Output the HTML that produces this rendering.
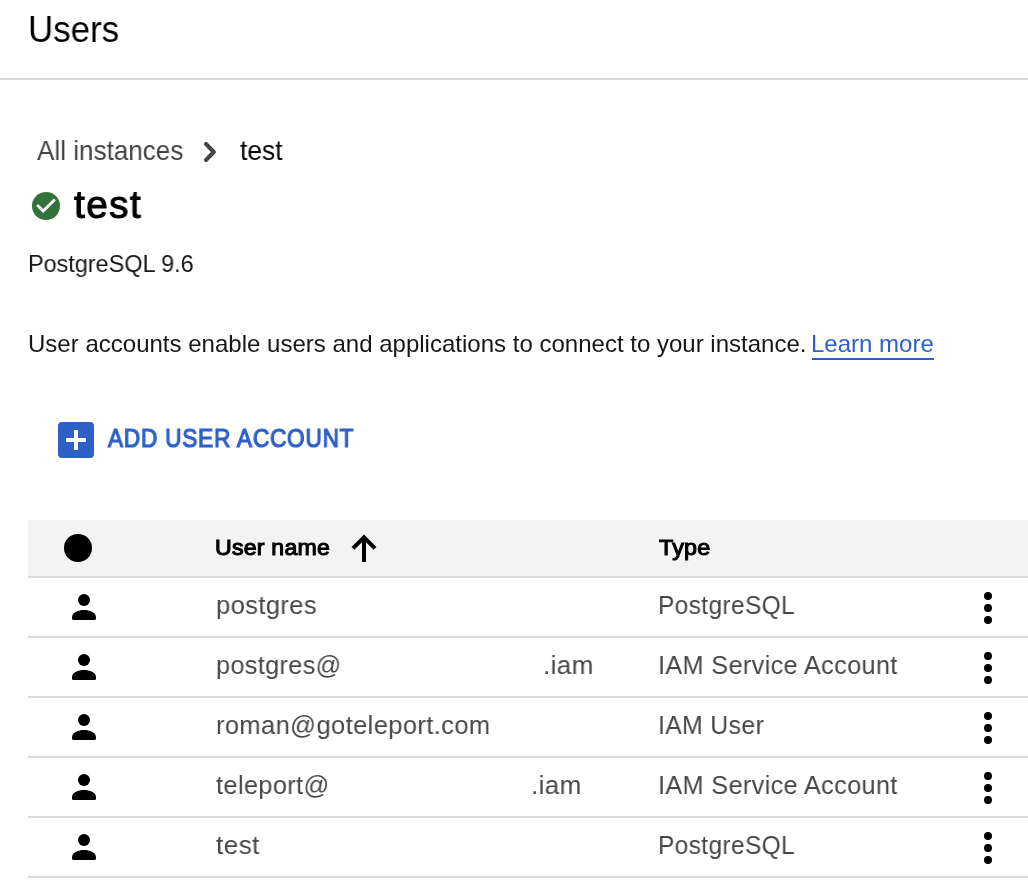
<!DOCTYPE html>
<html><head><meta charset="utf-8"><style>
html,body{margin:0;padding:0;background:#fff;width:1028px;height:894px;overflow:hidden;position:relative}
.t{position:absolute;white-space:pre;will-change:transform;font-family:"Liberation Sans",sans-serif;transform-origin:0 0}
.line{position:absolute;left:28px;width:1000px;height:2px;background:#dadada}
.ic{position:absolute;fill:#000}
</style></head><body>
<div style="position:absolute;left:0;top:78px;width:1028px;height:2px;background:#d9d9d9"></div>
<svg class="ic" style="left:204px;top:142px" width="13" height="20" viewBox="0 0 13 20"><path d="M2 2L9.8 10L2 18" fill="none" stroke="#444" stroke-width="4" stroke-linecap="round" stroke-linejoin="round"/></svg>
<svg class="ic" style="left:32px;top:192px" width="28" height="28" viewBox="2 2 20 20"><circle cx="12" cy="12" r="10" fill="#33733b"/><path d="M10 17l-5-5 1.41-1.41L10 14.17l7.59-7.59L19 8z" fill="#fff"/></svg>
<div style="position:absolute;left:812px;top:358px;width:122px;height:2px;background:#2e60c8"></div>
<div style="position:absolute;left:58px;top:422px;width:36px;height:36px;border-radius:4px;background:#2e60c8"></div>
<div style="position:absolute;left:66px;top:438px;width:20px;height:4px;background:#fff"></div>
<div style="position:absolute;left:74px;top:430px;width:4px;height:20px;background:#fff"></div>
<div style="position:absolute;left:28px;top:520px;width:1000px;height:56px;background:#f3f3f3"></div>
<div class="line" style="top:576px"></div>
<svg class="ic" style="left:64px;top:534px" width="28" height="28" viewBox="0 0 28 28"><circle cx="14" cy="14" r="14"/></svg>
<svg class="ic" style="left:346px;top:530px" width="36" height="36" viewBox="0 0 36 36"><path d="M18 4.5L5.5 17L8.33 19.83L16 12.16V32H20V12.16L27.67 19.83L30.5 17Z"/></svg>
<div class="line" style="top:636px"></div><svg class="ic" style="left:66px;top:588px" width="36" height="36" viewBox="0 0 36 36"><circle cx="18" cy="12" r="6"/><path d="M6 29C6 24.5 12.5 22 18 22S30 24.5 30 29V30.5Q30 32 28.5 32H7.5Q6 32 6 30.5Z"/></svg><svg class="ic" style="left:970px;top:590px" width="36" height="36" viewBox="0 0 36 36"><circle cx="18" cy="6" r="4"/><circle cx="18" cy="18" r="4"/><circle cx="18" cy="30" r="4"/></svg><div class="line" style="top:696px"></div><svg class="ic" style="left:66px;top:648px" width="36" height="36" viewBox="0 0 36 36"><circle cx="18" cy="12" r="6"/><path d="M6 29C6 24.5 12.5 22 18 22S30 24.5 30 29V30.5Q30 32 28.5 32H7.5Q6 32 6 30.5Z"/></svg><svg class="ic" style="left:970px;top:650px" width="36" height="36" viewBox="0 0 36 36"><circle cx="18" cy="6" r="4"/><circle cx="18" cy="18" r="4"/><circle cx="18" cy="30" r="4"/></svg><div class="line" style="top:756px"></div><svg class="ic" style="left:66px;top:708px" width="36" height="36" viewBox="0 0 36 36"><circle cx="18" cy="12" r="6"/><path d="M6 29C6 24.5 12.5 22 18 22S30 24.5 30 29V30.5Q30 32 28.5 32H7.5Q6 32 6 30.5Z"/></svg><svg class="ic" style="left:970px;top:710px" width="36" height="36" viewBox="0 0 36 36"><circle cx="18" cy="6" r="4"/><circle cx="18" cy="18" r="4"/><circle cx="18" cy="30" r="4"/></svg><div class="line" style="top:816px"></div><svg class="ic" style="left:66px;top:768px" width="36" height="36" viewBox="0 0 36 36"><circle cx="18" cy="12" r="6"/><path d="M6 29C6 24.5 12.5 22 18 22S30 24.5 30 29V30.5Q30 32 28.5 32H7.5Q6 32 6 30.5Z"/></svg><svg class="ic" style="left:970px;top:770px" width="36" height="36" viewBox="0 0 36 36"><circle cx="18" cy="6" r="4"/><circle cx="18" cy="18" r="4"/><circle cx="18" cy="30" r="4"/></svg><div class="line" style="top:876px"></div><svg class="ic" style="left:66px;top:828px" width="36" height="36" viewBox="0 0 36 36"><circle cx="18" cy="12" r="6"/><path d="M6 29C6 24.5 12.5 22 18 22S30 24.5 30 29V30.5Q30 32 28.5 32H7.5Q6 32 6 30.5Z"/></svg><svg class="ic" style="left:970px;top:830px" width="36" height="36" viewBox="0 0 36 36"><circle cx="18" cy="6" r="4"/><circle cx="18" cy="18" r="4"/><circle cx="18" cy="30" r="4"/></svg>
<div class="t" style="left:28.06px;top:12.1px;font-size:36px;line-height:36px;font-weight:400;color:#000;transform:scaleX(0.9692);">Users</div>
<div class="t" style="left:36.6px;top:137.0px;font-size:28px;line-height:28px;font-weight:400;color:#444;transform:scaleX(0.9312);">All instances</div>
<div class="t" style="left:240.4px;top:136.6px;font-size:28px;line-height:28px;font-weight:400;color:#000;transform:scaleX(0.9444);">test</div>
<div class="t" style="left:74.0px;top:184.8px;font-size:39px;line-height:39px;font-weight:400;color:#000;transform:scaleX(0.9941);-webkit-text-stroke:1.0px #000;letter-spacing:1.4px;">test</div>
<div class="t" style="left:27.65px;top:252.1px;font-size:24px;line-height:24px;font-weight:400;color:#161616;transform:scaleX(0.9754);">PostgreSQL 9.6</div>
<div class="t" style="left:27.8px;top:332.1px;font-size:24px;line-height:24px;font-weight:400;color:#161616;transform:scaleX(1.0009);">User accounts enable users and applications to connect to your instance.</div>
<div class="t" style="left:811.3px;top:332.1px;font-size:24px;line-height:24px;font-weight:400;color:#2e60c8;transform:scaleX(0.9992);">Learn more</div>
<div class="t" style="left:107.7px;top:425.9px;font-size:25px;line-height:25px;font-weight:400;color:#2e60c8;transform:scaleX(0.9029);-webkit-text-stroke:1.2px #2e60c8;letter-spacing:0.9px;">ADD USER ACCOUNT</div>
<div class="t" style="left:215.47px;top:537.0px;font-size:22.5px;line-height:22.5px;font-weight:400;color:#000;transform:scaleX(1.0288);-webkit-text-stroke:1.1px #000;letter-spacing:0.2px;">User name</div>
<div class="t" style="left:658.5px;top:537.0px;font-size:22.5px;line-height:22.5px;font-weight:400;color:#000;transform:scaleX(1.0367);-webkit-text-stroke:1.1px #000;letter-spacing:0.2px;">Type</div>
<div class="t" style="left:216.34px;top:591.7px;font-size:26.5px;line-height:26.5px;font-weight:400;color:#474747;transform:scaleX(0.9631);letter-spacing:0.4px;">postgres</div>
<div class="t" style="left:657.75px;top:591.8px;font-size:26.5px;line-height:26.5px;font-weight:400;color:#474747;transform:scaleX(0.9233);letter-spacing:0.4px;">PostgreSQL</div>
<div class="t" style="left:216.35px;top:651.8px;font-size:26.5px;line-height:26.5px;font-weight:400;color:#474747;transform:scaleX(0.9504);letter-spacing:0.4px;">postgres@</div>
<div class="t" style="left:543.24px;top:651.8px;font-size:26.5px;line-height:26.5px;font-weight:400;color:#474747;transform:scaleX(0.9812);letter-spacing:0.4px;">.iam</div>
<div class="t" style="left:658.2px;top:651.8px;font-size:26.5px;line-height:26.5px;font-weight:400;color:#474747;transform:scaleX(0.9508);letter-spacing:0.4px;">IAM Service Account</div>
<div class="t" style="left:216.34px;top:711.8px;font-size:26.5px;line-height:26.5px;font-weight:400;color:#474747;transform:scaleX(0.9622);letter-spacing:0.4px;">roman@goteleport.com</div>
<div class="t" style="left:658.23px;top:711.8px;font-size:26.5px;line-height:26.5px;font-weight:400;color:#474747;transform:scaleX(0.9342);letter-spacing:0.4px;">IAM User</div>
<div class="t" style="left:216.1px;top:771.8px;font-size:26.5px;line-height:26.5px;font-weight:400;color:#474747;transform:scaleX(0.9556);letter-spacing:0.4px;">teleport@</div>
<div class="t" style="left:531.14px;top:771.8px;font-size:26.5px;line-height:26.5px;font-weight:400;color:#474747;transform:scaleX(0.9792);letter-spacing:0.4px;">.iam</div>
<div class="t" style="left:658.2px;top:771.8px;font-size:26.5px;line-height:26.5px;font-weight:400;color:#474747;transform:scaleX(0.9508);letter-spacing:0.4px;">IAM Service Account</div>
<div class="t" style="left:216.1px;top:831.8px;font-size:26.5px;line-height:26.5px;font-weight:400;color:#474747;transform:scaleX(0.9864);letter-spacing:0.4px;">test</div>
<div class="t" style="left:657.75px;top:831.8px;font-size:26.5px;line-height:26.5px;font-weight:400;color:#474747;transform:scaleX(0.9233);letter-spacing:0.4px;">PostgreSQL</div>
</body></html>
